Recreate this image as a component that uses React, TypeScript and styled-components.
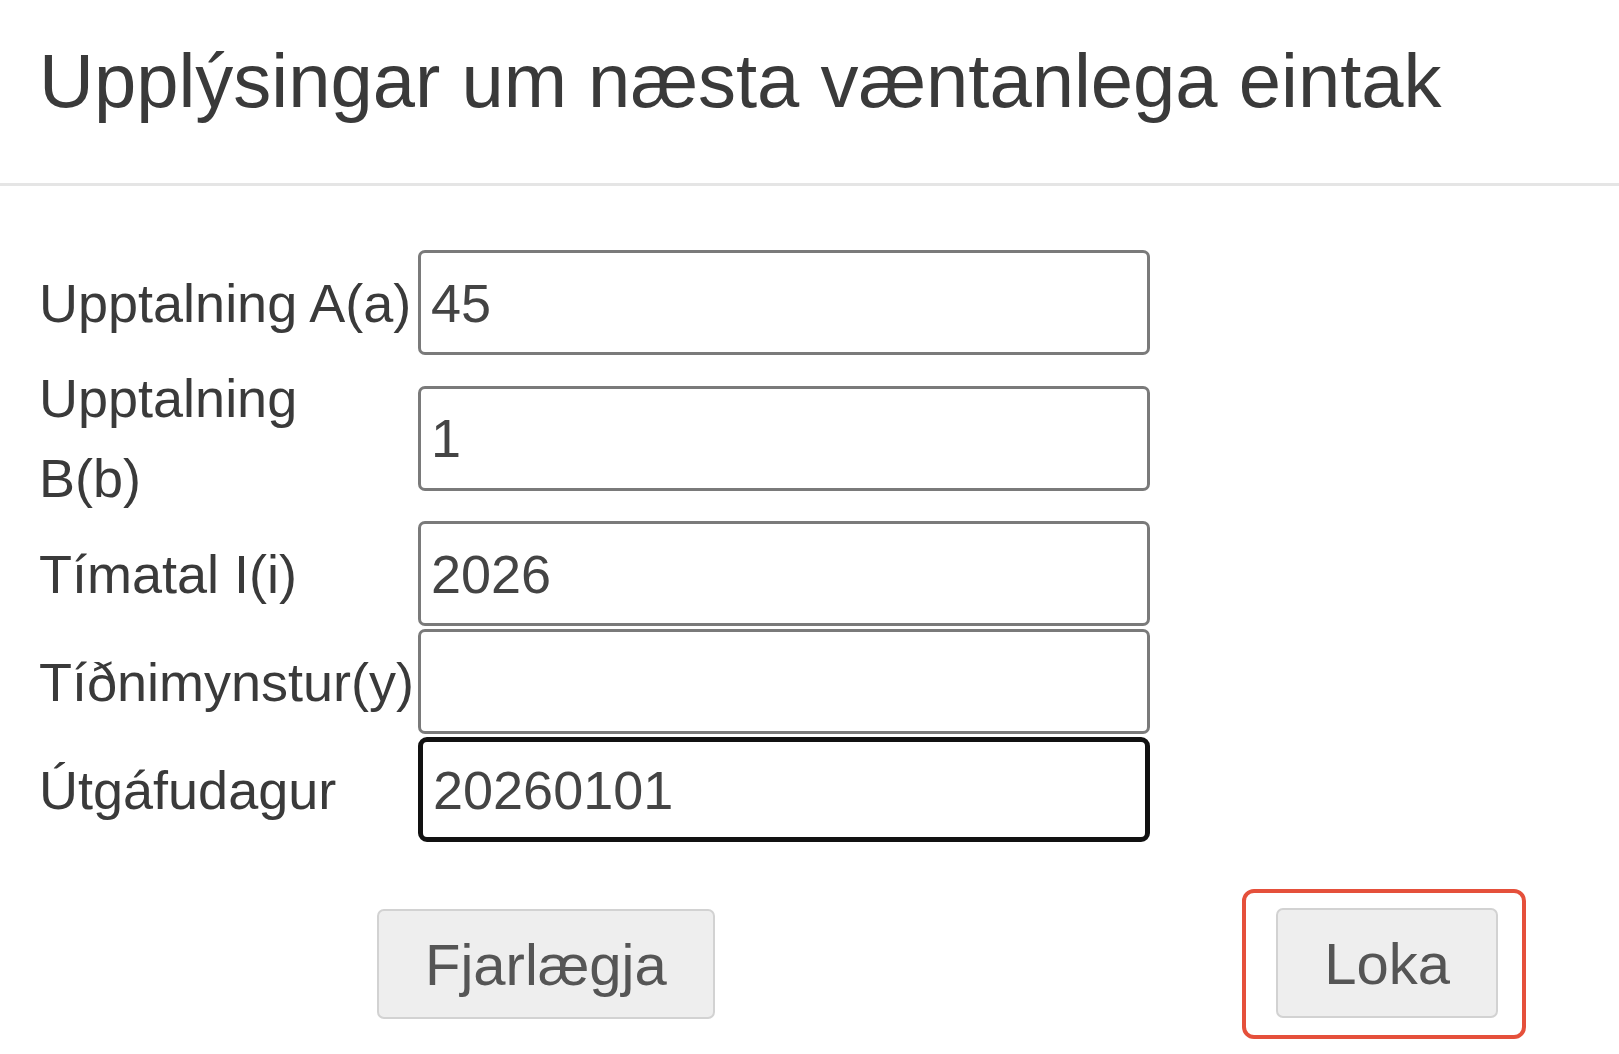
import styled, { createGlobalStyle } from "styled-components";

const GlobalStyle = createGlobalStyle`
  html, body {
    margin: 0;
    padding: 0;
    background: #fff;
  }
  body {
    font-family: "Liberation Sans", Arial, sans-serif;
    color: #333;
  }
`;

type Field = { label: string; value: string; focused?: boolean };

const fields: Field[] = [
  { label: "Upptalning A(a)", value: "45" },
  { label: "Upptalning\nB(b)", value: "1" },
  { label: "Tímatal I(i)", value: "2026" },
  { label: "Tíðnimynstur(y)", value: "" },
  { label: "Útgáfudagur", value: "20260101", focused: true },
];

const App = () => {
  return (
    <>
      <GlobalStyle />
      <Modal>
        <Header>
          <Title>Upplýsingar um næsta væntanlega eintak</Title>
        </Header>
        <Body>
          <Form>
            {fields.map((f) => (
              <Row key={f.label}>
                <Label>{f.label}</Label>
                <Input defaultValue={f.value} focused={f.focused} readOnly />
              </Row>
            ))}
          </Form>
          <Footer>
            <Button>Fjarlægja</Button>
            <Highlight>
              <Button>Loka</Button>
            </Highlight>
          </Footer>
        </Body>
      </Modal>
    </>
  );
};

export default App;

const Modal = styled.div`
  width: 1619px;
  min-height: 1054px;
  background: #fff;
`;

const Header = styled.div`
  padding: 39px 39px 60px;
  border-bottom: 3px solid #e5e5e5;
`;

const Title = styled.h4`
  margin: 0;
  font-size: 76px;
  line-height: 84px;
  font-weight: 400;
  color: #3a3a3a;
  white-space: nowrap;
`;

const Body = styled.div`
  padding: 64px 0 0 39px;
`;

const Form = styled.div`
  display: flex;
  flex-direction: column;
  gap: 3px;
`;

const Row = styled.div`
  display: grid;
  grid-template-columns: 379px 732px;
  align-items: center;
`;

const Label = styled.div`
  font-size: 54px;
  line-height: 80px;
  color: #3a3a3a;
  white-space: pre-line;
`;

const Input = styled.input<{ focused?: boolean }>`
  box-sizing: border-box;
  width: 732px;
  height: 105px;
  padding: 0 10px;
  font-family: "Liberation Sans", Arial, sans-serif;
  font-size: 54px;
  color: #444;
  background: #fff;
  border: ${(p) => (p.focused ? "5px solid #111" : "3px solid #7a7a7a")};
  border-radius: ${(p) => (p.focused ? "9px" : "7px")};
  outline: none;
`;

const Footer = styled.div`
  display: flex;
  align-items: center;
  justify-content: space-between;
  padding: 47px 93px 0 338px;
`;

const Button = styled.button`
  box-sizing: border-box;
  height: 110px;
  padding: 0 46px;
  font-family: "Liberation Sans", Arial, sans-serif;
  font-size: 58px;
  color: #555;
  background: #eee;
  border: 2px solid #d2d2d2;
  border-radius: 7px;
  cursor: pointer;
`;

const Highlight = styled.div`
  padding: 15px 24px 17px 30px;
  border: 4px solid #e5503b;
  border-radius: 12px;
`;
